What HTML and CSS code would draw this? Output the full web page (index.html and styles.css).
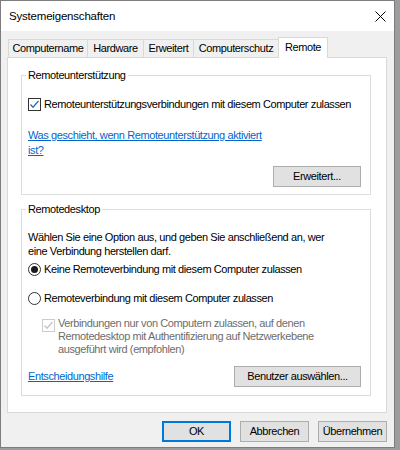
FILE: index.html
```html
<!DOCTYPE html>
<html lang="de">
<head>
<meta charset="utf-8">
<title>Systemeigenschaften</title>
<link rel="stylesheet" href="styles.css">
</head>
<body>
<div class="window">
  <div class="titlebar">
    <span class="title">Systemeigenschaften</span>
    <svg class="close" width="11" height="11" viewBox="0 0 11 11"><path d="M0.5 0.5L10.5 10.5M10.5 0.5L0.5 10.5" stroke="#000" stroke-width="1" fill="none"/></svg>
  </div>
  <div class="dialog">
    <div class="tabs">
      <div class="tab w1">Computername</div>
      <div class="tab w2">Hardware</div>
      <div class="tab w3">Erweitert</div>
      <div class="tab w4">Computerschutz</div>
      <div class="tab w5 active">Remote</div>
    </div>
    <div class="panel">
      <fieldset class="group">
        <legend>Remoteunterstützung</legend>
        <div class="row first">
          <span class="check"><svg width="11" height="11" viewBox="0 0 11 11"><path d="M1.5 5.5L4 8.2L9.5 2" stroke="#2b6cb8" stroke-width="1.3" fill="none"/></svg></span>
          <span>Remoteunterstützungsverbindungen mit diesem Computer zulassen</span>
        </div>
        <a class="link help">Was geschieht, wenn Remoteunterstützung aktiviert<br>ist?</a>
        <div class="actions">
          <button class="btn adv">Erweitert...</button>
        </div>
      </fieldset>
      <fieldset class="group second">
        <legend>Remotedesktop</legend>
        <p class="intro">Wählen Sie eine Option aus, und geben Sie anschließend an, wer<br>eine Verbindung herstellen darf.</p>
        <div class="row radio-row">
          <span class="radio on"><span class="dot"></span></span>
          <span>Keine Remoteverbindung mit diesem Computer zulassen</span>
        </div>
        <div class="row radio-row gap">
          <span class="radio"></span>
          <span>Remoteverbindung mit diesem Computer zulassen</span>
        </div>
        <div class="sub">
          <span class="check disabled"><svg width="11" height="11" viewBox="0 0 11 11"><path d="M1.5 5.5L4 8.2L9.5 2" stroke="#c4c4c4" stroke-width="1.3" fill="none"/></svg></span>
          <span class="sub-text">Verbindungen nur von Computern zulassen, auf denen<br>Remotedesktop mit Authentifizierung auf Netzwerkebene<br>ausgeführt wird (empfohlen)</span>
        </div>
        <div class="bottom-row">
          <a class="link">Entscheidungshilfe</a>
          <button class="btn users">Benutzer auswählen...</button>
        </div>
      </fieldset>
    </div>
    <div class="buttons">
      <button class="btn dlg default">OK</button>
      <button class="btn dlg">Abbrechen</button>
      <button class="btn dlg">Übernehmen</button>
    </div>
  </div>
</div>
</body>
</html>
```

FILE: styles.css
```css
* { box-sizing: border-box; }

html, body { margin: 0; }

body {
  width: 400px;
  height: 450px;
  overflow: hidden;
  background: #9d9d9d;
  font-family: "Liberation Sans", Arial, sans-serif;
  font-size: 11px;
  letter-spacing: -0.4px;
  color: #000;
  white-space: nowrap;
}

.window {
  width: 395px;
  height: 448px;
  border: 1px solid #7d7d7d;
  background: #f0f0f0;
  display: flex;
  flex-direction: column;
}

/* title bar */
.titlebar {
  flex: none;
  height: 30px;
  background: #fff;
  display: flex;
  align-items: center;
  justify-content: space-between;
  padding: 0 8px 0 8px;
}

.title {
  font-size: 11.5px;
  letter-spacing: -0.2px;
  line-height: 15px;
}

.close { display: block; }

/* dialog body */
.dialog {
  padding: 6px 7px 0 6px;
}

.tabs {
  display: flex;
  align-items: flex-end;
  height: 20px;
  padding-left: 1px;
  position: relative;
  z-index: 1;
}

.tab {
  height: 18px;
  border: 1px solid #d9d9d9;
  border-bottom: none;
  margin-right: -1px;
  background: #f0f0f0;
  display: flex;
  align-items: center;
  justify-content: center;
  line-height: 15px;
}

.w1 { width: 80px; }
.w2 { width: 57px; }
.w3 { width: 51px; }
.w4 { width: 86px; }
.w5 { width: 50px; }

.tab.active {
  height: 21px;
  background: #fff;
  margin-bottom: -1px;
  padding-bottom: 2px;
  position: relative;
}

.panel {
  height: 356px;
  background: #fff;
  border: 1px solid #d9d9d9;
  padding: 10px 15px 0 13px;
}

/* group boxes */
.group {
  margin: 0;
  padding: 0 9px 7px 6px;
  border: 1px solid #dcdcdc;
  min-width: 0;
}

.group legend {
  margin-left: -2px;
  padding: 0 2px;
  line-height: 15px;
}

.group.second {
  margin-top: 7px;
  padding-bottom: 8px;
}

.row {
  display: flex;
  align-items: center;
  gap: 3px;
  height: 15px;
  line-height: 15px;
}

.row.first { margin-top: 14px; }

.check {
  flex: none;
  width: 13px;
  height: 13px;
  border: 1px solid #333;
  background: #fff;
  display: flex;
  align-items: center;
  justify-content: center;
}

.check.disabled { border-color: #cccccc; }

.radio {
  flex: none;
  width: 13px;
  height: 13px;
  border: 1px solid #333;
  border-radius: 50%;
  background: #fff;
  display: flex;
  align-items: center;
  justify-content: center;
}

.radio .dot {
  width: 7px;
  height: 7px;
  border-radius: 50%;
  background: #1a1a1a;
}

.link {
  color: #0066cc;
  text-decoration: underline;
  cursor: pointer;
}

.help {
  display: block;
  margin-top: 16px;
  line-height: 15px;
}

.actions {
  display: flex;
  justify-content: flex-end;
  margin-top: 8px;
}

.btn {
  height: 21px;
  padding: 0;
  border: 1px solid #adadad;
  background: #e1e1e1;
  font-family: inherit;
  font-size: 11px;
  letter-spacing: -0.4px;
  color: #000;
  line-height: 15px;
}

.adv { width: 88px; }
.users { width: 127px; }

.intro {
  margin: 13px 0 0;
  line-height: 14px;
}

.radio-row { margin-top: 4px; }
.radio-row.gap { margin-top: 14px; }

.sub {
  display: flex;
  align-items: flex-start;
  gap: 3px;
  margin-top: 11px;
  padding-left: 14px;
}

.sub .check { margin-top: 2px; }

.sub-text {
  color: #6d6d6d;
  line-height: 13px;
}

.bottom-row {
  display: flex;
  align-items: center;
  justify-content: space-between;
  margin-top: 10px;
  line-height: 15px;
}

/* dialog buttons */
.buttons {
  display: flex;
  justify-content: flex-end;
  gap: 9px;
  margin-top: 8px;
}

.dlg { width: 69px; }

.dlg.default {
  border-color: #0078d7;
  box-shadow: inset 0 0 0 1px #0078d7;
}
```
